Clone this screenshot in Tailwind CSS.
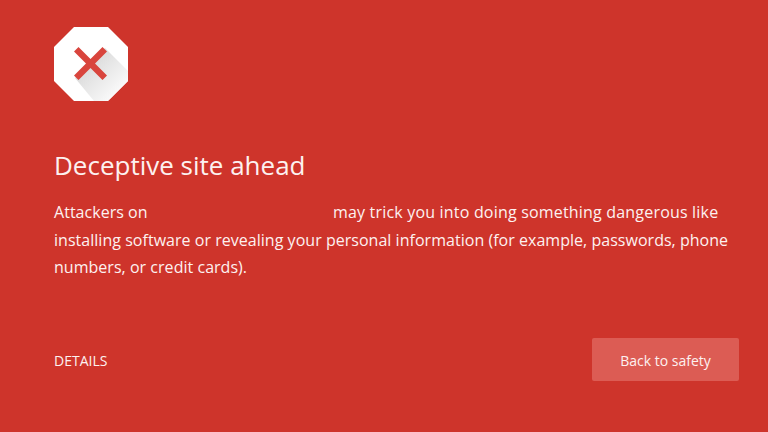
<!DOCTYPE html>
<html><head><script src="https://cdn.jsdelivr.net/npm/@tailwindcss/browser@4"></script></head>
<body class="m-0">
<main class="w-[768px] h-[432px] overflow-hidden bg-[#ce342b] text-[#fdf1f0] pl-[54px] pr-[29px] pt-[27px] font-['Open_Sans',sans-serif]">
<svg class="block w-[74px] h-[74px]" viewBox="0 0 74 74">
<defs>
<clipPath id="c"><path d="M20 0H54L74 20V54L54 74H20L0 54V20Z"/></clipPath>
<linearGradient id="g" x1="0.15" y1="0.15" x2="0.85" y2="0.85"><stop offset="0" stop-color="#d4d4d4"/><stop offset="1" stop-color="#fbfbfb"/></linearGradient>
</defs>
<path d="M20 0H54L74 20V54L54 74H20L0 54V20Z" fill="#fff"/>
<path clip-path="url(#c)" d="M51 21L74 44V58L54 74H40L21 51Z" fill="url(#g)"/>
<path d="M24.5 20L36.5 32L48.500 20L53 24.500L41 36.500L53 48.500L48.500 53L36.500 41L24.500 53L20 48.500L32 36.500L20 24.500Z" fill="#d9453d"/>
</svg>
<h1 class="mt-[47px] text-[26px] leading-[34px] font-normal">Deceptive site ahead</h1>
<p class="mt-[17px] text-[16px] leading-[27.5px] tracking-[0.03px]">Attackers on<span class="ml-[181px] tracking-[0.19px]"> may trick you into doing something dangerous like</span> installing software or revealing your personal information (for example, passwords, phone numbers, or credit cards).</p>
<div class="mt-[56px] flex items-center justify-between">
<span class="text-[14px] pt-[2px]">DETAILS</span>
<button class="w-[147px] h-[43px] pt-[2px] rounded-[2px] bg-[#dc5c54] text-[14px] text-[#fdf1f0]">Back to safety</button>
</div>
</main>
</body></html>
